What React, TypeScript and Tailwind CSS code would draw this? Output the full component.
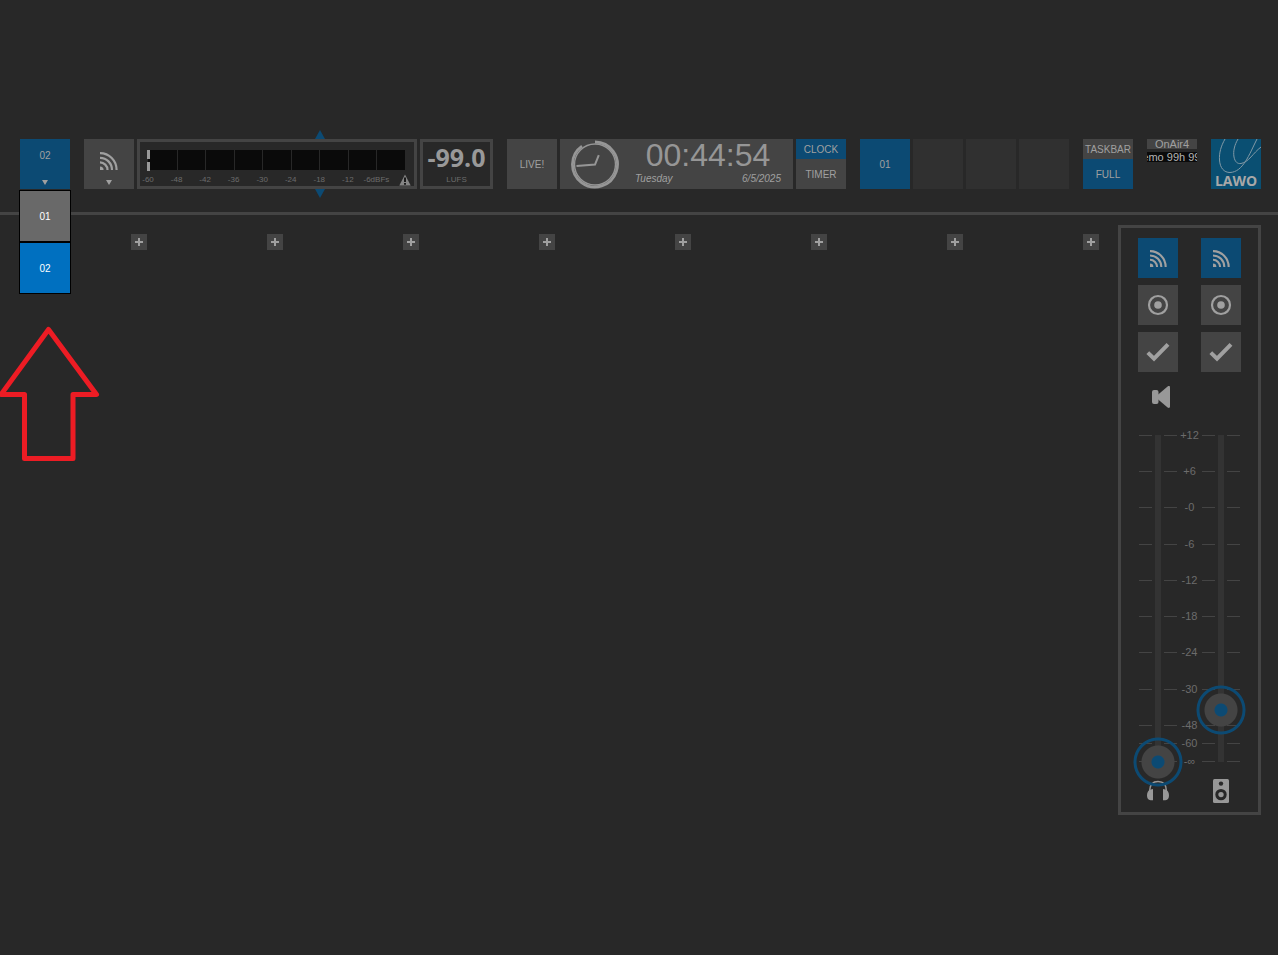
import type { ReactNode } from "react";

const meterLabels = ["-60", "-48", "-42", "-36", "-30", "-24", "-18", "-12", "-6dBFs"];
const faderLabels = ["+12", "+6", "-0", "-6", "-12", "-18", "-24", "-30", "-48", "-60", "-∞"];
const channels = [1, 2, 3, 4, 5, 6, 7, 8];

const grey = "bg-[#444444]";
const blue = "bg-[#0c4a73]";

function OnAirIcon({ className }: { className: string }) {
  return (
    <svg viewBox="0 0 18 18" className={className} fill="none" stroke="currentColor" strokeWidth="2.2">
      <path d="M0 1.2A16.500 16.800 0 0 1 16.600 18" />
      <path d="M0 5.800A12 12.200 0 0 1 12 18" />
      <path d="M0 10.400A7.500 7.600 0 0 1 7.500 18" />
      <path d="M0 14.400A3.600 3.600 0 0 1 3.600 18H0z" fill="currentColor" stroke="none" />
    </svg>
  );
}

function RecordIcon() {
  return (
    <svg viewBox="0 0 22 22" className="size-[22px]">
      <circle cx="11" cy="11" r="9" fill="none" stroke="currentColor" strokeWidth="2.2" />
      <circle cx="11" cy="11" r="3.8" fill="currentColor" />
    </svg>
  );
}

function CheckIcon() {
  return (
    <svg viewBox="0 0 24 20" className="h-5 w-6" fill="none" stroke="currentColor" strokeWidth="4">
      <path d="M1.8 10.6 8 16.6 22 2.4" />
    </svg>
  );
}

function SpeakerIcon() {
  return (
    <svg viewBox="0 0 18 22" className="h-[22px] w-[18px] text-[#989898]" fill="currentColor">
      <rect x="0" y="4" width="6.5" height="14" rx="2" />
      <path d="M5 9.600 15.600.5C17-.3 18 .2 18 1.500v19c0 1.300-1 1.800-2.400 1L5 12.400z" />
    </svg>
  );
}

function HeadphonesIcon() {
  return (
    <svg viewBox="0 0 24 24" className="size-6 text-[#989898]" fill="currentColor">
      <path d="M3.6 12C3.6 5.5 7 2.600 12 2.600s8.400 2.900 8.400 9.400" fill="none" stroke="currentColor" strokeWidth="1.5" />
      <path d="M4.8 10.400 7 10v11.300H4.600C2 20.800 1 19 1 16.200c0-3 1.400-5 3.800-5.800z" />
      <path d="M19.200 10.400 17 10v11.300h2.400c2.600-.5 3.600-2.300 3.600-5.100 0-3-1.400-5-3.800-5.800z" />
    </svg>
  );
}

function MonitorIcon() {
  return (
    <svg viewBox="0 0 16 24" className="h-6 w-4">
      <rect width="16" height="24" rx="1.5" fill="#989898" />
      <circle cx="8" cy="4.6" r="2.2" fill="#282828" />
      <circle cx="8" cy="15.6" r="4.2" fill="none" stroke="#282828" strokeWidth="3" />
    </svg>
  );
}

function WarningIcon() {
  return (
    <svg viewBox="0 0 12 12" className="h-3 w-3 shrink-0">
      <path d="M6 .5 11.7 11.5H.3z" fill="#858585" />
      <path d="M5 3.500h2v4.500H5zM5 9h2v1.800H5z" fill="#1a1a1a" />
    </svg>
  );
}

function AnalogClock() {
  return (
    <svg viewBox="0 0 50 50" className="size-[50px] shrink-0" fill="none" stroke="#969696">
      <circle cx="25" cy="25.5" r="20.5" strokeWidth="1.4" />
      <path d="M25 3A22.500 22.500 0 1 1 12 7.100" strokeWidth="2.8" />
      <path d="M6.500 27 25 25.500l3.800-9.400" strokeWidth="2" />
    </svg>
  );
}

function LawoLogo() {
  return (
    <svg viewBox="0 0 50 50" className="size-[50px] shrink-0" role="img" aria-label="Lawo">
      <rect width="50" height="50" fill="#0a4f72" />
      <g fill="none" stroke="#8199a6" strokeWidth="1">
        <path d="M14 0C10 7 8 14 8.500 21 9 29 13 33.500 19 33.500 32 33 38 16 46 0" />
        <path d="M27 0C23.500 6 22 12 23 18c1 5 3.500 7 7 6.500C38 23 42 14 50 8" />
      </g>
      <text x="25" y="47" textAnchor="middle" fontFamily="Open Sans, sans-serif" fontSize="14" fontWeight="700" fill="#a8a8a8">
        LAWO
      </text>
    </svg>
  );
}

function Caret() {
  return (
    <svg viewBox="0 0 6 5" className="h-[5px] w-[6px]">
      <path d="M0 0h6L3 5z" fill="#a0a0a0" />
    </svg>
  );
}

function Tile({ className, children }: { className: string; children?: ReactNode }) {
  return (
    <button type="button" className={`flex h-[50px] w-[50px] shrink-0 items-center justify-center ${className}`}>
      {children}
    </button>
  );
}

function LayerMenu() {
  return (
    <div className="relative shrink-0">
      <button type="button" aria-expanded="true" className={`flex h-[50px] w-[50px] flex-col items-center justify-between pt-[9px] pb-1 ${blue}`}>
        <span>02</span>
        <Caret />
      </button>
      <div className="absolute top-[51px] -left-px z-10 w-[52px] text-white">
        <button type="button" className="block h-[52px] w-full border border-black bg-[#696969]">01</button>
        <button type="button" className="block h-[52px] w-full border border-black bg-[#0070c0]">02</button>
      </div>
    </div>
  );
}

function LevelMeter() {
  return (
    <div className="relative h-[50px] w-[280px] shrink-0 border-3 border-[#444444] pt-2 pr-[9px] pl-2">
      <div className="relative grid h-5 grid-cols-9 bg-[#0a0a0a]">
        {meterLabels.map((label) => (
          <span key={label} className="border-l border-[#282828] first:border-0" />
        ))}
        <span className="absolute top-0 -left-px h-[9px] w-[3px] bg-[#999999]" />
        <span className="absolute top-3 -left-px h-[9px] w-[3px] bg-[#999999]" />
      </div>
      <div className="mt-1 flex h-3 items-center justify-between text-[8px] text-[#6c6c6c]">
        {meterLabels.map((label) => (
          <span key={label} className="flex w-0 justify-center whitespace-nowrap">{label}</span>
        ))}
        <span className="flex w-0 justify-center"><WarningIcon /></span>
      </div>
      <svg viewBox="0 0 10 9" className="absolute -top-[12px] left-[175px] h-[9px] w-[10px]">
        <path d="M5 0 10 9H0z" fill="#0c4a73" />
      </svg>
      <svg viewBox="0 0 10 9" className="absolute -bottom-[12px] left-[175px] h-[9px] w-[10px]">
        <path d="M0 0h10L5 9z" fill="#0c4a73" />
      </svg>
    </div>
  );
}

function Header() {
  return (
    <header className="flex gap-[14px] border-b-3 border-[#444444] pt-[139px] pr-[17px] pb-[23px] pl-5">
      <LayerMenu />
      <div className="flex gap-[3px]">
        <button type="button" aria-label="On air" className={`flex h-[50px] w-[50px] shrink-0 flex-col items-center justify-between pt-[13px] pb-1 ${grey}`}>
          <OnAirIcon className="size-[18px]" />
          <Caret />
        </button>
        <LevelMeter />
        <div className="flex h-[50px] w-[73px] shrink-0 flex-col items-center border-3 border-[#444444]">
          <span className="h-8 font-['Open_Sans',sans-serif] text-[25px] leading-[30px] font-bold text-[#999999]">-99.0</span>
          <span className="text-[8px] leading-3 text-[#6c6c6c]">LUFS</span>
        </div>
      </div>

      <div className="flex min-w-0 flex-1 gap-[3px]">
        <Tile className={grey}>LIVE!</Tile>
        <div className={`flex h-[50px] min-w-0 flex-1 items-center pr-3 pl-[10px] ${grey}`}>
          <AnalogClock />
          <div className="ml-[15px] flex-1 pb-1">
            <div className="text-center text-[32px] leading-8 text-[#969696]">00:44:54</div>
            <div className="flex h-[14px] items-center justify-between italic">
              <span>Tuesday</span>
              <span>6/5/2025</span>
            </div>
          </div>
        </div>
        <div className="flex h-[50px] w-[50px] shrink-0 flex-col">
          <button type="button" className={`h-5 ${blue}`}>CLOCK</button>
          <button type="button" className={`flex-1 ${grey}`}>TIMER</button>
        </div>
      </div>

      <div className="flex gap-[3px]">
        <Tile className={blue}>01</Tile>
        <Tile className="bg-[#303030]" />
        <Tile className="bg-[#303030]" />
        <Tile className="bg-[#303030]" />
      </div>

      <div className="flex h-[50px] w-[50px] shrink-0 flex-col">
        <button type="button" className={`flex h-5 items-center justify-center ${grey}`}>TASKBAR</button>
        <button type="button" className={`flex-1 ${blue}`}>FULL</button>
      </div>

      <div className="flex w-[50px] shrink-0 flex-col gap-[3px] text-[11px] leading-[10px]">
        <div className={`flex h-[10px] justify-center ${grey}`}>OnAir4</div>
        <div className="flex h-[10px] justify-center overflow-hidden bg-[#0a0a0a] whitespace-nowrap text-[#b4b4b4]">Demo 99h 99m</div>
      </div>

      <LawoLogo />
    </header>
  );
}

function SourceButtons({ children }: { children?: ReactNode }) {
  return (
    <div className="flex w-10 flex-col gap-[7px]">
      <button type="button" aria-label="On air" className={`flex h-10 items-center justify-center ${blue}`}>
        <OnAirIcon className="size-[17px]" />
      </button>
      <button type="button" aria-label="Record" className={`flex h-10 items-center justify-center ${grey}`}>
        <RecordIcon />
      </button>
      <button type="button" aria-label="Confirm" className={`flex h-10 items-center justify-center ${grey}`}>
        <CheckIcon />
      </button>
      <div className="flex h-9 items-center justify-center pl-1.5">{children}</div>
    </div>
  );
}

function Fader({ label, value }: { label: string; value: number }) {
  return (
    <div className="relative flex h-[327px] w-10 justify-center">
      <span className="w-1.5 bg-[#333333]" />
      <input
        type="range"
        aria-label={label}
        defaultValue={value}
        className="absolute -top-[25px] -left-[5px] m-0 h-[377px] w-[50px] appearance-none bg-transparent [direction:rtl] [writing-mode:vertical-lr] [&::-webkit-slider-thumb]:size-[50px] [&::-webkit-slider-thumb]:appearance-none [&::-webkit-slider-thumb]:rounded-full [&::-webkit-slider-thumb]:bg-[radial-gradient(circle,#0c4a73_6px,#444444_7px,#444444_16px,transparent_17px,transparent_21px,#0c4a73_22px,#0c4a73_24px,transparent_25px)]"
      />
    </div>
  );
}

function Tick() {
  return <span className="h-px w-[13px] shrink-0 bg-[#444444]" />;
}

function MonitorPanel() {
  return (
    <aside className="w-[143px] shrink-0 border-3 border-[#444444] px-[17px] pt-[10px] pb-[9px]">
      <div className="flex justify-between">
        <SourceButtons><SpeakerIcon /></SourceButtons>
        <SourceButtons />
      </div>
      <div className="mt-5 grid">
        <div className="z-0 grid grid-rows-[repeat(8,2fr)_1fr_1fr_1px] [grid-area:1/1]">
          {faderLabels.map((label) => (
            <div key={label} className="flex h-px items-center px-px text-[11px] leading-none text-[#6c6c6c]">
              <Tick />
              <span className="w-3 shrink-0" />
              <Tick />
              <span className="flex flex-1 justify-center">{label}</span>
              <Tick />
              <span className="w-3 shrink-0" />
              <Tick />
            </div>
          ))}
        </div>
        <div className="z-10 flex justify-between [grid-area:1/1]">
          <Fader label="Headphones" value={0} />
          <Fader label="Speaker" value={16} />
        </div>
      </div>
      <div className="mt-[17px] flex justify-between">
        <span className="flex w-10 justify-center"><HeadphonesIcon /></span>
        <span className="flex w-10 justify-center"><MonitorIcon /></span>
      </div>
    </aside>
  );
}

export default function App() {
  return (
    <div className="relative min-h-screen overflow-hidden bg-[#282828] font-['Liberation_Sans',Arial,sans-serif] text-[10px] text-[#a0a0a0]">
      <Header />
      <main className="flex gap-[19px] pt-[10px] pr-[17px] pl-[11px]">
        <div className="grid flex-1 grid-cols-8 pt-[9px]">
          {channels.map((channel) => (
            <div key={channel} className="flex justify-end">
              <button type="button" aria-label={`Add channel ${channel}`} className={`flex size-4 items-center justify-center ${grey}`}>
                <svg viewBox="0 0 8 8" className="size-2">
                  <path d="M3 0h2v3h3v2H5v3H3V5H0V3h3z" fill="#a0a0a0" />
                </svg>
              </button>
            </div>
          ))}
        </div>
        <MonitorPanel />
      </main>

      {/* pointer to the open layer menu */}
      <svg viewBox="0 0 100 136" className="absolute top-[326px] left-0 h-[136px] w-[100px]" fill="none" stroke="#ed1c24" strokeWidth="5" strokeLinejoin="round">
        <path d="M48.500 3.500 96.500 68.500H73v64H24.500v-64H1z" />
      </svg>
    </div>
  );
}
